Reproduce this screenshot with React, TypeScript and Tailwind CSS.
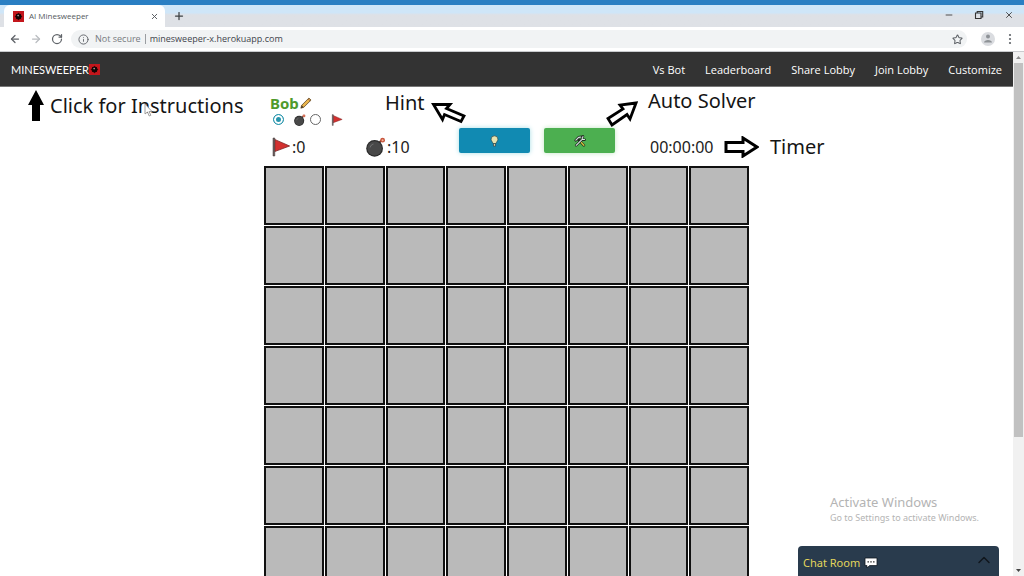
/**
 * Minesweeper lobby shown inside a browser window, with help callouts around the controls.
 */

import { useState } from "react";
import type { ReactNode } from "react";
import { ArrowLeft, ArrowRight, ChevronUp, Info, Minus, Plus, RotateCw, Star, X } from "lucide-react";

const NAV_LINKS = ["Vs Bot", "Leaderboard", "Share Lobby", "Join Lobby", "Customize"];
const COLUMNS = 8;
const ROWS = 8;

function MineLogo({ className }: { className: string }) {
  return (
    <svg viewBox="0 0 12 12" className={className} aria-hidden="true">
      <rect width="12" height="12" fill="#c4161c" />
      <path d="M6 2v8M2 6h8M3.2 3.2l5.6 5.6M8.8 3.2L3.2 8.8" stroke="#3a0708" strokeWidth="0.9" />
      <circle cx="6" cy="6" r="3.2" fill="#120404" />
      <circle cx="5.6" cy="5" r="0.9" fill="#b9a5a5" />
    </svg>
  );
}

function BombIcon({ className }: { className: string }) {
  return (
    <svg viewBox="0 0 20 20" className={className} aria-hidden="true">
      <path d="M12.5 6.5l2.4-2.6c1-1 2.2-.6 2.3.8" fill="none" stroke="#5b3a30" strokeWidth="2" />
      <circle cx="16.6" cy="3.2" r="2.4" fill="#c8553d" />
      <circle cx="16.6" cy="3.2" r="1" fill="#f3b49a" />
      <path d="M11 4.2l4.800 4.600-2 2-4.800-4.600z" fill="#333" />
      <circle cx="8.6" cy="11.4" r="8.4" fill="#2b2b2b" />
      <circle cx="8.6" cy="11.4" r="7.2" fill="#484848" />
      <path d="M4.2 10.4c.3-1.8 1.6-3 3.2-3.3" fill="none" stroke="#777" strokeWidth="1" />
    </svg>
  );
}

function FlagIcon({ className }: { className: string }) {
  return (
    <svg viewBox="0 0 20 20" className={className} aria-hidden="true">
      <path d="M3.6 2.4L18.6 9 3.6 14.6z" fill="#d3302f" stroke="#7c2323" strokeWidth="0.8" />
      <path d="M2 1h1.8v18H2z" fill="#6f6262" stroke="#3d3232" strokeWidth="0.5" />
    </svg>
  );
}

function PencilIcon() {
  return (
    <svg viewBox="0 0 14 14" className="h-3 w-3" aria-hidden="true">
      <path d="M1 13l1-3.4L10.4 1.2l2.5 2.4L4.4 12z" fill="#e9b44c" stroke="#5e4521" strokeWidth="0.9" />
      <path d="M1 13l1-3.4L4.4 12z" fill="#4b3a28" />
      <path d="M9.4 2.2l2.5 2.4" stroke="#8d4b3a" strokeWidth="0.9" />
    </svg>
  );
}

function BulbIcon() {
  return (
    <svg viewBox="0 0 10 14" className="h-3 w-[9px]" aria-hidden="true">
      <path d="M5 1a4 4 0 0 0-4 4c0 1.8 1.7 2.8 2.2 5h3.6C7.3 7.8 9 6.8 9 5a4 4 0 0 0-4-4z" fill="#e8e3b0" stroke="#28434a" strokeWidth="0.8" />
      <path d="M3.8 10h2.4v3H3.8z" fill="#e3d3a8" stroke="#28434a" strokeWidth="0.8" />
    </svg>
  );
}

function ToolsIcon() {
  return (
    <svg viewBox="0 0 14 14" className="h-3 w-3" fill="none" strokeLinecap="round" aria-hidden="true">
      <path d="M5 5l6.5 7" stroke="#1f2b1f" strokeWidth="3" />
      <path d="M8 8.2l3.5 3.8" stroke="#d6c23c" strokeWidth="1.6" />
      <path d="M2 6.2L5.5 2.5 8.5 2.2" stroke="#1f2b1f" strokeWidth="3" />
      <path d="M2.2 6L5.5 2.7 8 2.4" stroke="#d5dcde" strokeWidth="1.4" />
      <path d="M2.5 12l7-7M10.5 1.5c-2 1.5-1.5 4.5 2 4" stroke="#1f2b1f" strokeWidth="2.8" />
      <path d="M2.5 12l7-7M10.5 1.8c-1.8 1.5-1.2 4 1.8 3.5" stroke="#dfe6e9" strokeWidth="1.2" />
    </svg>
  );
}

function ChatIcon() {
  return (
    <svg viewBox="0 0 14 12" className="h-3 w-3.5" aria-hidden="true">
      <path d="M1 1h12v7.6H5.6L3 11V8.6H1z" fill="#fff" stroke="#101820" strokeWidth="0.8" />
      <path d="M3.5 4.8h1.4M6.3 4.8h1.4M9.1 4.8h1.4" stroke="#222" strokeWidth="1.3" />
    </svg>
  );
}

function BrowserChrome() {
  return (
    <header className="shrink-0 text-[#5f6368]">
      <div className="h-[5px] bg-[#2a7fc3]" />
      <div className="flex h-[22px] items-stretch bg-linear-to-b from-[#cfe6f8] from-35% to-[#dee1e6] to-45%">
        <div className="ml-1 flex w-[161px] items-center rounded-t-md bg-white pr-1.5 pl-[9px] font-[Open_Sans,sans-serif] text-[8px] text-[#55595e]">
          <MineLogo className="h-[11px] w-[11px]" />
          <span className="ml-[5px] flex-1">AI Minesweeper</span>
          <button aria-label="Close tab"><X className="h-[9px] w-[9px]" strokeWidth={2.5} /></button>
        </div>
        <button aria-label="New tab" className="ml-2 text-[#3c4043]"><Plus className="h-3 w-3" strokeWidth={2.5} /></button>
        <div className="ml-auto flex h-[19px] items-center gap-5 pr-2.5 text-[#333]">
          <button aria-label="Minimize"><Minus className="h-2.5 w-2.5" /></button>
          <button aria-label="Restore">
            <svg viewBox="0 0 10 10" className="h-2.5 w-2.5" fill="none" stroke="currentColor" strokeWidth="1.1">
              <path d="M1.5 3h5.5v5.5H1.5zM3.2 3V1.5h5.5v5.5H7" />
            </svg>
          </button>
          <button aria-label="Close window"><X className="h-2.5 w-2.5" /></button>
        </div>
      </div>
      <div className="flex h-[25px] items-center border-b border-[#c9cbce] bg-white px-[9px]">
        <button aria-label="Back"><ArrowLeft className="h-3 w-3" strokeWidth={2.5} /></button>
        <button aria-label="Forward" className="ml-[9px] text-[#b9bcc0]"><ArrowRight className="h-3 w-3" strokeWidth={2.5} /></button>
        <button aria-label="Reload" className="ml-[9px]"><RotateCw className="h-3 w-3" strokeWidth={2.5} /></button>
        <div className="ml-2 flex h-[18px] flex-1 items-center rounded-full bg-[#f1f3f4] pr-[3px] pl-[7px] font-[Open_Sans,sans-serif] text-[9px]">
          <Info className="h-[11px] w-[11px]" />
          <span className="ml-1.5 whitespace-nowrap text-[#777b80]">Not secure</span>
          <span className="mx-1 h-2.5 w-px bg-[#9a9da1]" />
          <input aria-label="Address" className="min-w-0 flex-1 bg-transparent text-[#3f444b] outline-none" defaultValue="minesweeper-x.herokuapp.com" />
          <button aria-label="Bookmark" className="mr-px"><Star className="h-[11px] w-[11px]" strokeWidth={2.25} /></button>
        </div>
        <button aria-label="Profile" className="ml-3.5">
          <svg viewBox="0 0 14 14" className="h-3.5 w-3.5">
            <circle cx="7" cy="7" r="7" fill="#dadce0" />
            <circle cx="7" cy="4.5" r="2" fill="#8e9296" />
            <path d="M3 10.5c0-3.4 8-3.4 8 0z" fill="#8e9296" />
          </svg>
        </button>
        <button aria-label="Menu" className="mr-0.5 ml-3">
          <svg viewBox="0 0 6 12" className="h-3 w-1.5" fill="currentColor">
            <circle cx="3" cy="2" r="1.1" /><circle cx="3" cy="6" r="1.1" /><circle cx="3" cy="10" r="1.1" />
          </svg>
        </button>
      </div>
    </header>
  );
}

function SiteNav() {
  return (
    <nav className="flex h-[35px] items-center border-b border-[#777] bg-[#333] px-[11px] pt-0.5 text-white">
      <a href="#home" className="flex items-center font-[Lato,sans-serif] text-[11px]">
        MINESWEEPER
        <MineLogo className="mb-0.5 h-[11px] w-[11px]" />
      </a>
      <div className="ml-auto flex gap-5 font-[Open_Sans,sans-serif] text-[11px] font-medium whitespace-nowrap">
        {NAV_LINKS.map((label) => (
          <a key={label} href="#nav">{label}</a>
        ))}
      </div>
    </nav>
  );
}

function Callout({ className, children }: { className: string; children: ReactNode }) {
  return <div className={`absolute flex whitespace-nowrap text-[20px] leading-6 text-[#151515] ${className}`}>{children}</div>;
}

function GameHeader({ mode, onMode }: { mode: string; onMode: (mode: string) => void }) {
  const radio =
    "h-[11px] w-[11px] appearance-none rounded-full border border-[#666] bg-white checked:border-[#2795ad] checked:bg-[#2795ad] checked:shadow-[inset_0_0_0_2px_white]";
  return (
    <div className="h-[79px] pt-2">
      <div className="flex h-4 items-center gap-px pl-1.5 text-[15px] leading-4 font-bold text-[#4f9a2c]">
        Bob
        <button aria-label="Edit name"><PencilIcon /></button>
      </div>
      <div className="flex h-[17px] items-center pl-[9px]">
        <label className="flex items-center gap-2.5">
          <input type="radio" name="mode" aria-label="Dig" className={radio} checked={mode === "dig"} onChange={() => onMode("dig")} />
          <BombIcon className="h-3 w-3" />
        </label>
        <label className="ml-1 flex items-center gap-2.5">
          <input type="radio" name="mode" aria-label="Flag" className={radio} checked={mode === "flag"} onChange={() => onMode("flag")} />
          <FlagIcon className="h-3 w-3" />
        </label>
      </div>
      <div className="flex h-[38px] items-center pl-[7px] text-[16px] text-[#222]">
        <div className="flex w-[95px] items-center gap-px">
          <FlagIcon className="h-5 w-5" />:0
        </div>
        <div className="flex w-[93px] items-center gap-px">
          <BombIcon className="h-5 w-5" />:10
        </div>
        <button aria-label="Hint" className="flex h-[25px] w-[71px] items-center justify-center self-start rounded-xs bg-[#118ab2] shadow-[0_0_5px_#a5dde5]">
          <BulbIcon />
        </button>
        <button aria-label="Auto solver" className="ml-3.5 flex h-[25px] w-[71px] items-center justify-center self-start rounded-xs bg-[#4caf50] shadow-[0_0_5px_#c0e6c1]">
          <ToolsIcon />
        </button>
        <span className="ml-[35px]">00:00:00</span>
      </div>
    </div>
  );
}

export default function App() {
  const [mode, setMode] = useState("dig");

  return (
    <div className="flex h-screen flex-col overflow-hidden bg-white font-[Noto_Sans,sans-serif]">
      <BrowserChrome />
      <div className="flex min-h-0 flex-1">
        <main className="relative min-w-0 flex-1 overflow-hidden">
          <SiteNav />
          <div className="relative">
            <Callout className="top-[3px] left-7 items-center gap-1.5">
              <svg viewBox="0 0 16 31" className="h-[31px] w-4">
                <path d="M8 0l8 15h-4v16H4V15H0z" fill="#000" />
              </svg>
              Click for Instructions
            </Callout>
            <svg viewBox="0 0 9 14" className="absolute top-4 left-[144px] h-3.5 w-[9px]">
              <path d="M1 1v10l2.5-2 1.7 4 1.6-.7-1.7-3.8H8z" fill="#fff" stroke="#888" strokeWidth="0.8" />
            </svg>

            <div className="relative mx-auto w-[485px]">
              <GameHeader mode={mode} onMode={setMode} />
              <Callout className="top-1 left-[121px] gap-1.5">
                Hint
                <svg viewBox="0 0 35 24" className="mt-2.5 h-6 w-[35px]">
                  <path d="M2.5 3.5L19 3.5 15.5 7.5 33 15 30 20.5 13.5 13.5 11.5 18.5z" fill="#fff" stroke="#000" strokeWidth="2.8" />
                </svg>
              </Callout>
              <Callout className="top-0.5 left-[342px] gap-2.5">
                <svg viewBox="0 0 32 26" className="mt-3 h-[26px] w-8">
                  <path d="M30 2L14 4l3 4L2 17.5 6 24l15-10.5 3 4.5z" fill="#fff" stroke="#000" strokeWidth="2.8" />
                </svg>
                Auto Solver
              </Callout>
              <Callout className="top-12 left-[460px] items-center gap-[11px]">
                <svg viewBox="0 0 35 22" className="h-[22px] w-[35px]">
                  <path d="M2 6.5h17V2l14 9-14 9v-4.5H2z" fill="#fff" stroke="#000" strokeWidth="3" />
                </svg>
                Timer
              </Callout>
              <div className="grid auto-rows-[59px] grid-cols-8 gap-px">
                {Array.from({ length: COLUMNS * ROWS }, (_, i) => (
                  <button
                    key={i}
                    aria-label={`Row ${Math.floor(i / COLUMNS) + 1}, column ${(i % COLUMNS) + 1}`}
                    className="border-2 border-[#111] bg-[#bababa]"
                  />
                ))}
              </div>
            </div>
          </div>

          <div className="absolute right-[34px] bottom-[51px] text-[#b4b4b4]">
            <p className="text-[13px] leading-[18px]">Activate Windows</p>
            <p className="text-[9px] leading-[14px]">Go to Settings to activate Windows.</p>
          </div>
          <button className="absolute right-3.5 bottom-0 flex h-[30px] w-[201px] items-center gap-1 rounded-t-sm bg-[#293b4d] px-[5px] pt-1 text-[11px] text-[#e3d65c]">
            Chat Room
            <ChatIcon />
            <ChevronUp className="mb-1.5 ml-auto h-5 w-5 text-[#10161c]" strokeWidth={1.75} />
          </button>
        </main>

        {/* Scrollbar */}
        <div className="flex w-[11px] flex-col items-center bg-[#f1f1f1]" aria-hidden="true">
          <svg viewBox="0 0 11 11" className="h-[11px] w-[11px] shrink-0"><path d="M3 7l2.5-3L8 7z" fill="#8b8b8b" /></svg>
          <div className="w-[9px] basis-[374px] bg-[#c1c1c1]" />
          <svg viewBox="0 0 11 11" className="mt-auto h-[11px] w-[11px] shrink-0"><path d="M3 4l2.5 3L8 4z" fill="#444" /></svg>
        </div>
      </div>
    </div>
  );
}
